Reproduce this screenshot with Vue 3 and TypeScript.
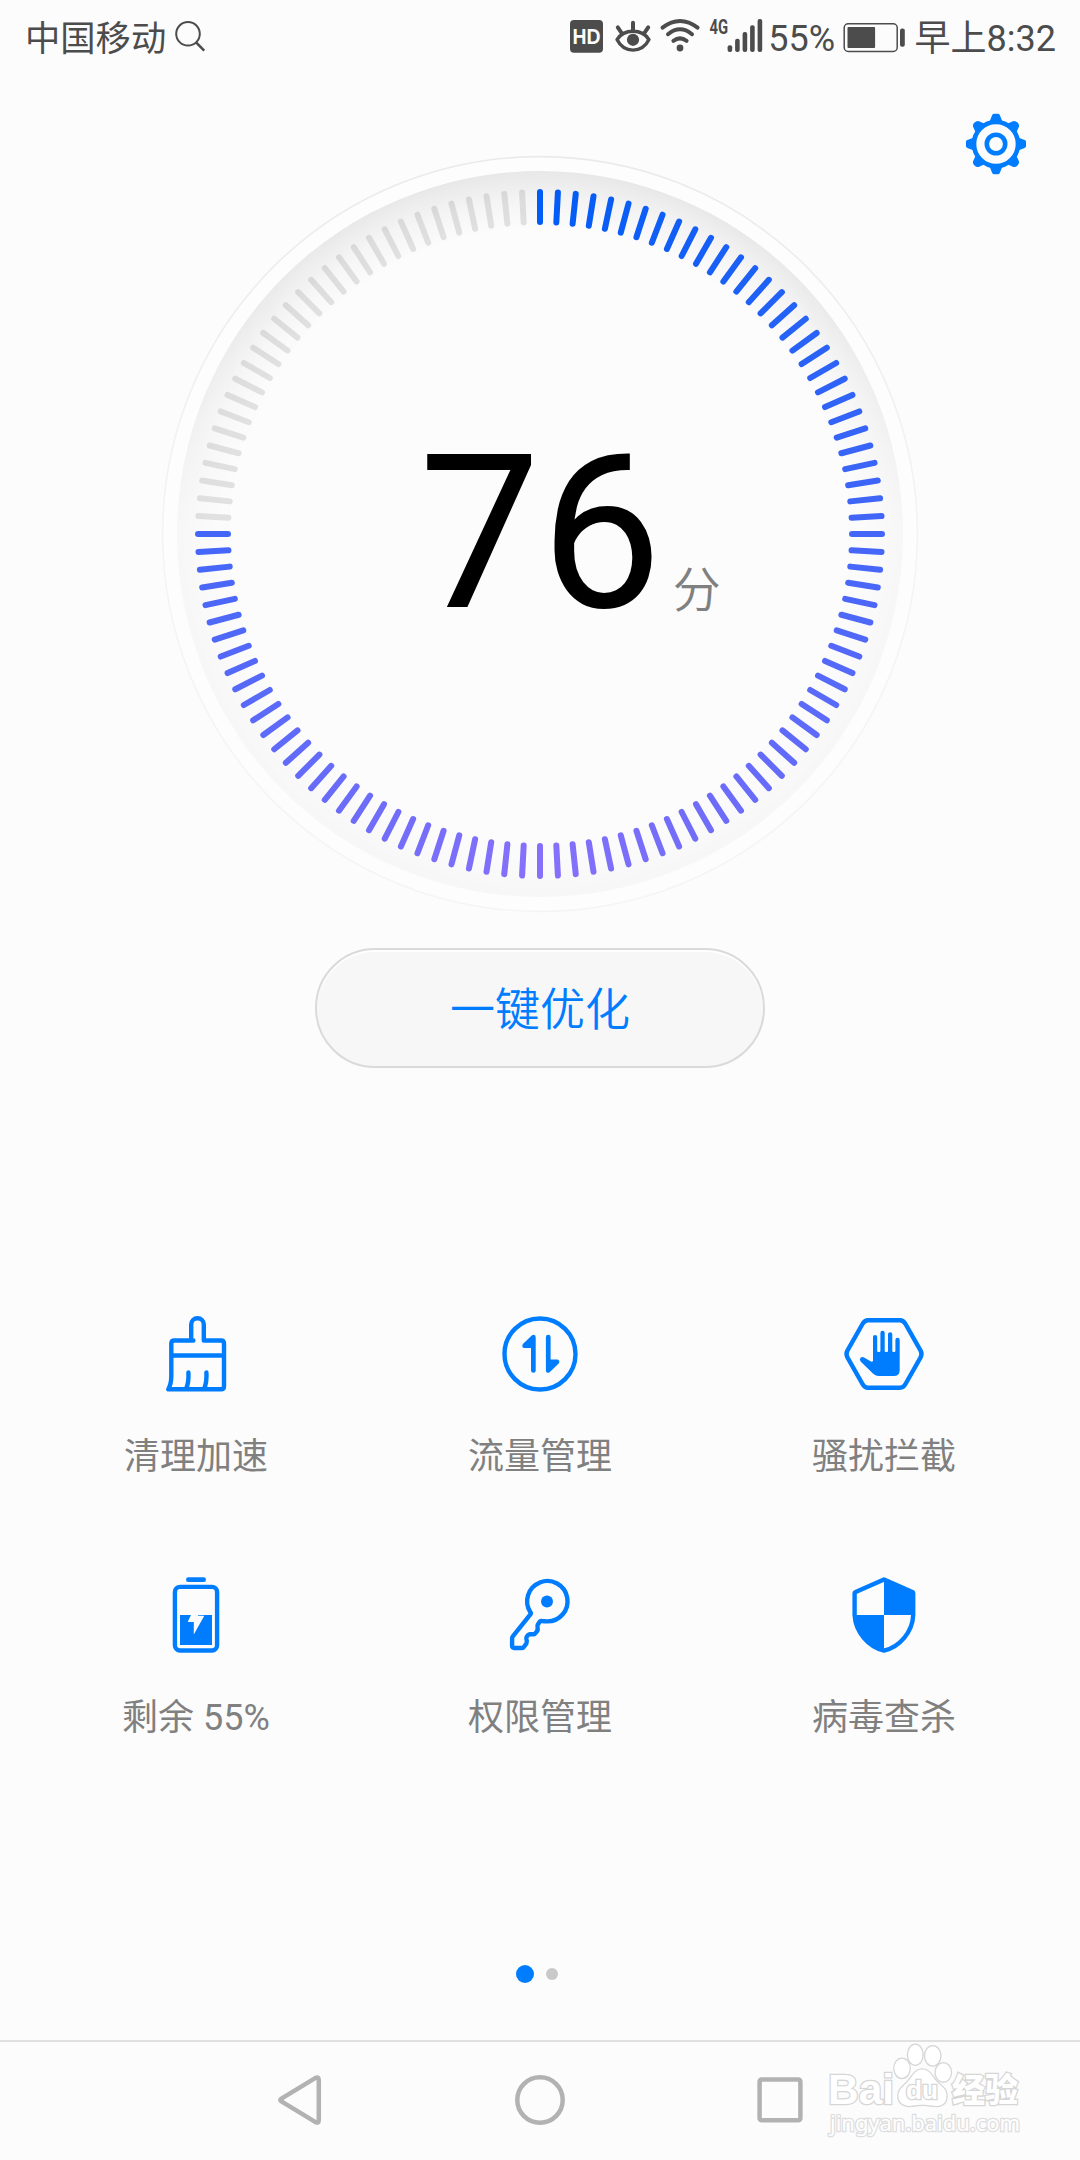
<script setup lang="ts">
interface Tick {
  angle: number
  color: string
}

interface Tool {
  id: string
  label: string
}

const TICK_COUNT = 120
const ACTIVE_TICKS = 91

const mix = (a: number, b: number, t: number): number => Math.round(a + (b - a) * t)

const ticks: Tick[] = Array.from({ length: TICK_COUNT }, (_, i) => {
  const angle = (i * 360) / TICK_COUNT
  const t = Math.min(angle, 360 - angle) / 180
  const color =
    i < ACTIVE_TICKS
      ? `rgb(${mix(0, 134, t)}, ${mix(92, 112, t)}, ${mix(245, 250, t)})`
      : 'rgba(0, 0, 0, 0.1)'
  return { angle, color }
})

const tools: Tool[] = [
  { id: 'clean', label: '清理加速' },
  { id: 'traffic', label: '流量管理' },
  { id: 'block', label: '骚扰拦截' },
  { id: 'battery', label: '剩余 55%' },
  { id: 'key', label: '权限管理' },
  { id: 'shield', label: '病毒查杀' },
]

const score = 76
</script>

<template>
  <main class="screen">
    <header class="status">
      <span class="carrier">中国移动</span>
      <svg class="search" width="32" height="36" viewBox="0 0 32 36">
        <circle cx="13" cy="14.8" r="11.8" />
        <path d="M20.8 23.2 L29.2 31.6" stroke-width="2.6" />
      </svg>
      <span class="spacer"></span>
      <svg class="sys" width="194" height="76" viewBox="570 0 194 76">
        <rect x="570" y="20" width="33" height="32.8" rx="4" />
        <text class="hd" x="572.6" y="44.2" textLength="28" lengthAdjust="spacingAndGlyphs">HD</text>
        <g class="line" stroke-width="3.4">
          <path d="M617 39.6 C624 28.4 642 28.4 649 39.6 C642 53.6 624 53.6 617 39.6 Z" />
          <path d="M633 22.8 V31 M617.8 27.4 L621.6 33 M648.2 27.4 L644.4 33" stroke-width="4" />
        </g>
        <circle cx="633" cy="39.8" r="6.1" />
        <g class="line" stroke-width="4">
          <path d="M662.5 27.6 Q680 14.4 697.6 27.6" />
          <path d="M668 34.2 Q680 24.4 692 34.2" />
          <path d="M673.4 40.8 Q680 36 686.6 40.8" />
        </g>
        <circle cx="680" cy="48" r="3.4" />
        <text class="net" x="709.6" y="34" textLength="18.6" lengthAdjust="spacingAndGlyphs">4G</text>
        <rect x="727.6" y="45.3" width="4.6" height="6.8" rx="2" />
        <rect x="735.1" y="38.7" width="4.6" height="13.4" rx="2" />
        <rect x="742.6" y="32" width="4.6" height="20.1" rx="2" />
        <rect x="750.1" y="25.3" width="4.6" height="26.8" rx="2" />
        <rect x="757.6" y="19" width="4.6" height="33.1" rx="2" />
      </svg>
      <span class="percent">55%</span>
      <svg class="sys batt" width="62" height="76" viewBox="843 0 62 76">
        <rect class="case" x="844.2" y="23.8" width="53" height="27.6" rx="4" />
        <rect x="847.5" y="27" width="27.6" height="20.9" rx="1" />
        <rect x="900" y="28.6" width="4.8" height="18.2" rx="2" />
      </svg>
      <span class="clock">早上8:32</span>
    </header>

    <div class="toolbar">
      <svg class="gear" width="60" height="62" viewBox="-30 -31 60 62">
        <path
          v-for="n in 8"
          :key="n"
          :d="
            n % 2
              ? 'M-6.4 -22 L-4.4 -27.4 Q-3.6 -30.4 0 -30.4 Q3.6 -30.4 4.4 -27.4 L6.4 -22 Z'
              : 'M-6.6 -22 L-4.2 -28 Q-3.6 -30.2 -2 -30.2 H2 Q3.6 -30.2 4.2 -28 L6.6 -22 Z'
          "
          :transform="`rotate(${n * 45})`"
        />
        <circle r="22" class="rim" />
        <circle r="9.2" class="rim" />
      </svg>
    </div>

    <section class="gauge">
      <svg class="dial" width="760" height="760" viewBox="-380 -380 760 760">
        <defs>
          <radialGradient id="edge" gradientUnits="userSpaceOnUse" cx="0" cy="0" r="363">
            <stop offset="0.84" stop-color="#000" stop-opacity="0" />
            <stop offset="0.92" stop-color="#000" stop-opacity="0.03" />
            <stop offset="1" stop-color="#000" stop-opacity="0.08" />
          </radialGradient>
          <linearGradient id="fade" gradientUnits="userSpaceOnUse" x1="0" y1="-363" x2="0" y2="363">
            <stop offset="0" stop-color="#fff" />
            <stop offset="0.2" stop-color="#fff" stop-opacity="0.85" />
            <stop offset="0.5" stop-color="#fff" stop-opacity="0.25" />
            <stop offset="1" stop-color="#fff" stop-opacity="0.27" />
          </linearGradient>
          <linearGradient id="halo" gradientUnits="userSpaceOnUse" x1="0" y1="-378" x2="0" y2="378">
            <stop offset="0" stop-color="#eaeaea" />
            <stop offset="0.5" stop-color="#f4f4f4" />
            <stop offset="1" stop-color="#f5f5f5" />
          </linearGradient>
          <mask id="shade" maskUnits="userSpaceOnUse" x="-380" y="-380" width="760" height="760">
            <rect x="-380" y="-380" width="760" height="760" fill="url(#fade)" />
          </mask>
        </defs>
        <circle r="377.4" fill="#fdfdfd" stroke="url(#halo)" stroke-width="1.6" />
        <circle r="363" fill="#fcfcfc" />
        <circle r="363" fill="url(#edge)" mask="url(#shade)" />
        <line
          v-for="tick in ticks"
          :key="tick.angle"
          y1="-342"
          y2="-312"
          :stroke="tick.color"
          :transform="`rotate(${tick.angle})`"
          stroke-width="6"
          stroke-linecap="round"
        />
      </svg>
      <div class="score">
        <span class="value">{{ score }}</span>
        <span class="unit">分</span>
      </div>
    </section>

    <button class="optimize" type="button">一键优化</button>

    <section class="tools">
      <div v-for="tool in tools" :key="tool.id" class="tool">
        <svg class="icon" width="84" height="84" viewBox="0 0 84 84">
          <template v-if="tool.id === 'clean'">
            <path
              class="stroke"
              d="M39.4 28.5 H20.3 Q17.3 28.5 17.3 31.5 V64 Q17.3 72 14.2 77.3 H67 Q70 77.3 70 74.3 V31.5 Q70 28.5 67 28.5 H49.8 V12.5 A6.3 6.3 0 0 0 37.2 12.5 V28.5 M17.3 43.5 H70"
            />
            <path class="stroke" d="M34.4 60.5 Q34.9 70 32.4 76 M52.4 60.5 Q52.9 70 50.4 76" />
          </template>
          <template v-else-if="tool.id === 'traffic'">
            <circle class="stroke" cx="42" cy="42" r="35.5" />
            <path
              d="M33 36 V58.4 A2.35 2.35 0 0 0 37.7 58.4 V25.4 Q37.7 21.6 34 23.3 L24.9 32 Q23.2 35 26 36 Z"
            />
            <path
              d="M33 36 V58.4 A2.35 2.35 0 0 0 37.7 58.4 V25.4 Q37.7 21.6 34 23.3 L24.9 32 Q23.2 35 26 36 Z"
              transform="rotate(180 42.8 41.8)"
            />
          </template>
          <template v-else-if="tool.id === 'block'">
            <path
              class="stroke"
              d="M5.4 38.6 L20.5 12 Q22.6 8.2 26 8.2 H58 Q61.4 8.2 63.5 12 L78.6 38.6 Q80.4 42 78.6 45.4 L63.5 72 Q61.4 75.8 58 75.8 H26 Q22.6 75.8 20.5 72 L5.4 45.4 Q3.6 42 5.4 38.6 Z"
            />
            <path
              d="M31 50.4 V25.1 A2.1 2.1 0 0 1 35.2 25.1 V39.2 Q36.8 41 38.4 39.2 V20.9 A2.15 2.15 0 0 1 42.7 20.9 V39.2 Q44.4 41 46 39.2 V22.3 A2.15 2.15 0 0 1 50.3 22.3 V39.2 Q51.8 41 53.4 39.2 V27.9 A2.15 2.15 0 0 1 57.7 27.9 V58 Q57.7 64 51.7 64 H36.5 Q34 64 31.5 62 L18.6 49.6 Q17 47.4 18.6 45.8 Q20 44.5 22 45.5 L29 49.6 Q30.4 50.4 31 48.8 Z"
            />
          </template>
          <template v-else-if="tool.id === 'battery'">
            <rect x="32" y="4.3" width="20" height="4.8" rx="2.4" />
            <rect class="stroke" x="20.9" y="13.9" width="42.2" height="63.6" rx="5.2" />
            <path d="M26 42 H37 L33.7 48.9 H39.8 V61.4 L50.3 42.8 H44 V42 H58 V72 H26 Z" />
          </template>
          <template v-else-if="tool.id === 'key'">
            <path
              class="stroke"
              d="M32.6 41.2 Q33.3 40.3 32.4 39.2 A20.2 20.2 0 1 1 49 48.4 Q46 48.4 43.6 47.9 Q42.4 47.6 41.5 49 L40 51.4 Q39 52.8 39.5 54.5 Q40.2 57 38.6 58.8 L37 60.6 Q36.2 61.4 35 61.3 L32 61.2 Q30.8 61.2 30 62.2 L28.8 63.7 Q28 64.7 28.4 66 Q29.4 68.4 28.4 70.4 L26 73.8 Q25.2 75 24 75 H16.2 Q14.1 75 14.1 73 V65.5 Q14.1 64.3 15 63.2 Z"
            />
            <circle cx="49" cy="28.5" r="6" />
          </template>
          <template v-else>
            <path
              class="stroke"
              d="M42 6.4 L70.4 19 Q71.2 19.4 71.2 20.3 V42 C70.6 59 57.5 74 42 77.6 C26.5 74 13.4 59 12.6 42 V20.3 Q12.6 19.4 13.6 19 Z"
            />
            <path d="M42 6.4 L71 19.4 V42 H42 Z M42 42 V77.6 C26.5 74 13.4 59 12.6 42 Z" />
          </template>
        </svg>
        <span class="label">{{ tool.label }}</span>
      </div>
    </section>

    <div class="pager">
      <i class="dot current"></i>
      <i class="dot"></i>
    </div>

    <nav class="nav">
      <svg width="60" height="60" viewBox="0 0 60 60">
        <path d="M11.4 28.6 L45.6 7.8 Q48.8 6.4 48.8 10 V50 Q48.8 53.6 45.6 52.2 L11.4 31.4 Q9.2 30 11.4 28.6 Z" />
      </svg>
      <svg width="60" height="60" viewBox="0 0 60 60">
        <circle cx="30" cy="30" r="22.7" />
      </svg>
      <svg width="60" height="60" viewBox="0 0 60 60">
        <rect x="9.6" y="9.5" width="40.8" height="40.8" rx="2" />
      </svg>
    </nav>

    <svg class="watermark" width="210" height="105" viewBox="0 0 210 105">
      <text x="8" y="63.8" class="latin" textLength="66" lengthAdjust="spacingAndGlyphs">Bai</text>
      <ellipse cx="82" cy="28.3" rx="7.6" ry="9.6" />
      <ellipse cx="95.3" cy="14.7" rx="7.2" ry="10" />
      <ellipse cx="112.7" cy="15.8" rx="7.6" ry="9.6" />
      <ellipse cx="123.3" cy="32.4" rx="7.6" ry="9.2" />
      <path
        d="M102.4 29.6 C110 29.6 112 37 117 42 C122 47 127 49 126.4 57 C126 65 119 67 112 65.6 C105 64.4 100 64.4 93 65.6 C86 67 78.4 64 78.4 56 C78.4 49 84 46 88.4 41 C93 36 95 29.6 102.4 29.6 Z"
      />
      <text x="86" y="59" class="du" textLength="32" lengthAdjust="spacingAndGlyphs">du</text>
      <text x="132" y="62" class="han">经验</text>
      <text x="10" y="90.6" class="url" textLength="190" lengthAdjust="spacingAndGlyphs">jingyan.baidu.com</text>
    </svg>
  </main>
</template>

<style>
body {
  margin: 0;
  background: #fcfcfc;
}
</style>

<style scoped>
.screen {
  position: relative;
  display: flex;
  flex-direction: column;
  align-items: center;
  width: 1080px;
  height: 2160px;
  overflow: hidden;
  background: #fcfcfc;
  font-family: Roboto, 'Noto Sans CJK SC', sans-serif;
}

.status {
  display: flex;
  align-items: center;
  box-sizing: border-box;
  width: 100%;
  height: 76px;
  padding: 0 24px 0 25px;
  color: #4c4c4c;
  font-size: 36px;
  line-height: 76px;
  white-space: nowrap;
}

.carrier {
  width: 145px;
  padding-top: 2px;
  font-size: 35.3px;
}

.search {
  margin: -2px 0 0 5px;
  fill: none;
  stroke: #4c4c4c;
  stroke-width: 2;
}

.spacer {
  flex: 1;
}

.sys {
  fill: #4c4c4c;
}

.sys .line {
  fill: none;
  stroke: #4c4c4c;
  stroke-linecap: round;
  stroke-linejoin: round;
}

.sys .case {
  fill: none;
  stroke: #4c4c4c;
  stroke-width: 1.5;
}

.hd {
  fill: #fcfcfc;
  font: 700 22px 'Liberation Sans', sans-serif;
}

.net {
  font: 700 20px Roboto, sans-serif;
}

.percent {
  margin-left: 4px;
  padding-top: 2px;
}

.batt {
  margin-left: 8px;
}

.clock {
  margin-left: 9.5px;
  padding-top: 1px;
}

.toolbar {
  display: flex;
  justify-content: flex-end;
  box-sizing: border-box;
  width: 100%;
  height: 78px;
  padding: 37px 54px 0 0;
}

.gear {
  flex: none;
  fill: #007dff;
}

.gear .rim {
  fill: none;
  stroke: #007dff;
  stroke-width: 4.6;
}

.gauge {
  display: grid;
  width: 760px;
  height: 760px;
}

.dial,
.score {
  grid-area: 1 / 1;
}

.score {
  display: flex;
  align-items: baseline;
  padding: 253px 0 0 259px;
}

.value {
  color: #000;
  font-size: 216px;
  line-height: 254px;
}

.unit {
  margin-left: 11px;
  color: #808080;
  font-size: 48px;
  font-weight: 350;
}

.optimize {
  width: 450px;
  height: 120px;
  margin-top: 34px;
  padding: 6px 0 0;
  border: 2px solid #dadada;
  border-radius: 60px;
  background: #f7f7f7;
  box-shadow: inset 0 2px 1px #fff;
  color: #007dff;
  font-family: inherit;
  font-size: 45px;
  font-weight: 350;
  line-height: 110px;
}

.tools {
  display: grid;
  grid-template-columns: repeat(3, 344px);
  grid-auto-rows: 261px;
  margin-top: 244px;
}

.tool {
  display: flex;
  flex-direction: column;
  align-items: center;
}

.icon {
  fill: #007dff;
}

.icon .stroke {
  fill: none;
  stroke: #007dff;
  stroke-width: 4.4;
  stroke-linecap: round;
  stroke-linejoin: round;
}

.label {
  margin-top: 35px;
  color: #808080;
  font-size: 36px;
  line-height: 52px;
  white-space: pre;
}

.pager {
  display: flex;
  align-items: center;
  gap: 12px;
  height: 18px;
  margin-top: 131px;
  padding-right: 6px;
}

.dot {
  width: 12px;
  height: 12px;
  border-radius: 50%;
  background: #c9c9c9;
}

.dot.current {
  width: 18px;
  height: 18px;
  background: #007dff;
}

.nav {
  display: flex;
  align-items: center;
  justify-content: center;
  gap: 180px;
  box-sizing: border-box;
  width: 100%;
  height: 120px;
  margin-top: auto;
  padding-bottom: 2px;
  border-top: 2px solid #e0e0e0;
}

.nav svg {
  fill: none;
  stroke: #b2b2b2;
  stroke-width: 4.5;
  stroke-linejoin: round;
}

.watermark {
  position: absolute;
  top: 2040px;
  left: 820px;
  fill: #fff;
  stroke: #d6d6d6;
  stroke-width: 2.6;
  paint-order: stroke;
}

.latin {
  font: 700 43px 'Liberation Sans', sans-serif;
}

.du {
  font: 700 26px 'Liberation Sans', sans-serif;
}

.han {
  font: 900 33px 'Noto Sans CJK SC', sans-serif;
}

.url {
  stroke: #dedede;
  font: 400 22px 'Noto Sans', sans-serif;
}
</style>
